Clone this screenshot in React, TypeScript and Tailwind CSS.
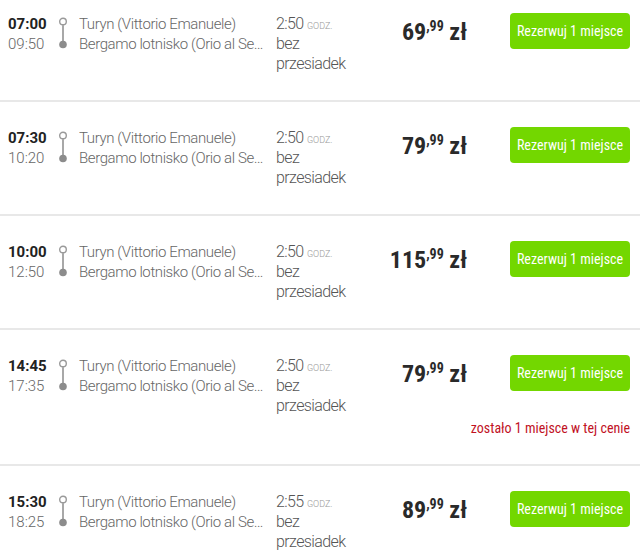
import React from 'react'

type Trip = {
  dep: string
  arr: string
  dur: string
  price: string
  note?: string
}

const trips: Trip[] = [
  { dep: '07:00', arr: '09:50', dur: '2:50', price: '69' },
  { dep: '07:30', arr: '10:20', dur: '2:50', price: '79' },
  { dep: '10:00', arr: '12:50', dur: '2:50', price: '115' },
  { dep: '14:45', arr: '17:35', dur: '2:50', price: '79', note: 'zostało 1 miejsce w tej cenie' },
  { dep: '15:30', arr: '18:25', dur: '2:55', price: '89' },
]

const condensed = "font-['Roboto_Condensed','Liberation_Sans_Narrow','Arial_Narrow',Roboto,sans-serif]"

function RouteIcon() {
  return (
    <svg width="12" height="32" viewBox="0 0 12 32" className="mt-[3px]">
      <circle cx="6" cy="4.5" r="3.3" fill="white" stroke="#9a9a9a" strokeWidth="1.4" />
      <line x1="6" y1="8" x2="6" y2="24" stroke="#a8a8a8" strokeWidth="2" />
      <circle cx="6" cy="27.5" r="3.8" fill="#8c8c8c" />
    </svg>
  )
}

function TripRow({ trip }: { trip: Trip }) {
  return (
    <div className="flex items-start border-b-2 border-[#e8e8e8] pl-2 pr-[10px] pt-[26px] pb-[26px]">
      {/* Times */}
      <div className="w-[44px] shrink-0 text-[15px] leading-[20px]">
        <div className="font-bold text-[#222]">{trip.dep}</div>
        <div className="font-light text-[#666]">{trip.arr}</div>
      </div>

      {/* Line icon */}
      <div className="w-[22px] shrink-0 flex justify-center">
        <RouteIcon />
      </div>

      {/* Stations */}
      <div className="ml-[5px] w-[187px] shrink-0 text-[15px] leading-[20px] font-light tracking-[-0.4px] text-[#666]">
        <div className="truncate">Turyn (Vittorio Emanuele)</div>
        <div className="truncate">Bergamo lotnisko (Orio al Serio)</div>
      </div>

      {/* Duration */}
      <div className="ml-[10px] w-[80px] shrink-0 text-[16px] leading-[20px] font-light tracking-[-0.6px] text-[#555]">
        <div className="h-[20px]">
          {trip.dur} <span className="text-[9px] leading-none uppercase tracking-normal text-[#999]">godz.</span>
        </div>
        <div>bez</div>
        <div>przesiadek</div>
      </div>

      {/* Price */}
      <div className={`w-[111px] shrink-0 text-right pt-[4px] leading-[28px] text-[#2a2a2a] font-bold ${condensed}`}>
        <span className="text-[24px]">{trip.price}</span>
        <span className="text-[14px] leading-none align-[9px]">,99</span>
        <span className="text-[24px]"> zł</span>
      </div>

      {/* Action */}
      <div className="ml-auto -mt-px flex flex-col items-end">
        <button
          className={`w-[120px] h-[36px] rounded-[4px] bg-[#73d700] text-white text-[14px] ${condensed}`}
        >
          Rezerwuj 1 miejsce
        </button>
        {trip.note && (
          <div className={`mt-[27px] text-[14px] leading-[20px] text-[#c1121f] ${condensed}`}>
            {trip.note}
          </div>
        )}
      </div>
    </div>
  )
}

export default function App() {
  return (
    <div className="w-[640px] h-[558px] overflow-hidden bg-white font-['Roboto',sans-serif]">
      <div className="-mt-[12px]">
        {trips.map((t, i) => (
          <TripRow key={i} trip={t} />
        ))}
      </div>
    </div>
  )
}
